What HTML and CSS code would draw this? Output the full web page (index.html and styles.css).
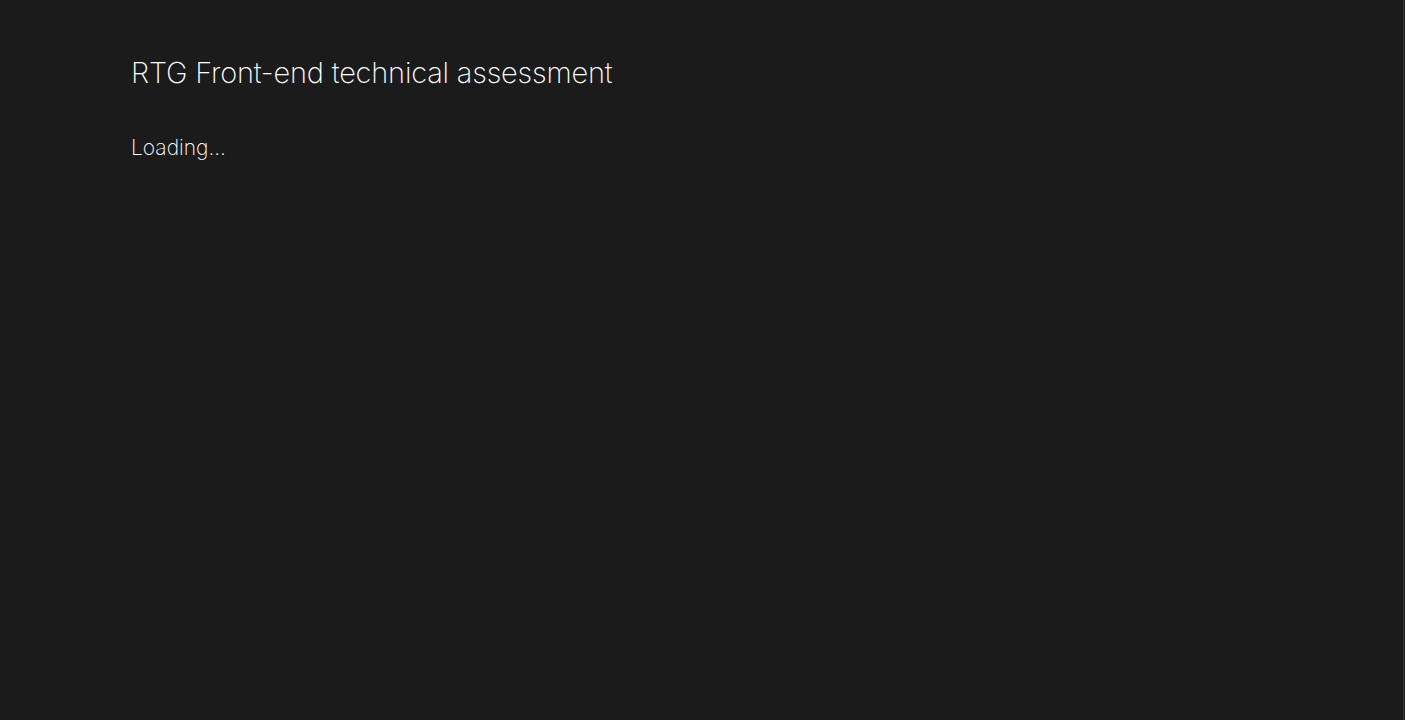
FILE: index.html
```html
<!DOCTYPE html>
<html lang="en">
<head>
<meta charset="utf-8">
<title>RTG Front-end technical assessment</title>
<link rel="stylesheet" href="styles.css">
</head>
<body>
<div class="page">
  <main class="content">
    <h1 class="title">RTG Front-end technical assessment</h1>
    <p class="status">Loading...</p>
  </main>
</div>
</body>
</html>
```

FILE: styles.css
```css
html, body {
  margin: 0;
  padding: 0;
  background: #1b1b1b;
  height: 100%;
}
body {
  font-family: Inter, "Noto Sans", sans-serif;
  color: #ffffff;
  overflow: hidden;
}
.page {
  height: 100vh;
  width: 1403px;
  border-right: 1px solid #3a3a3a;
  box-sizing: content-box;
}
.content {
  padding: 53px 0 0 131px;
}
.title {
  margin: 0;
  font-size: 29px;
  font-weight: 250;
  letter-spacing: -0.2px;
  line-height: 40px;
}
.status {
  margin: 40px 0 0;
  font-size: 21px;
  font-weight: 250;
  letter-spacing: 0;
  line-height: 30px;
}
```
